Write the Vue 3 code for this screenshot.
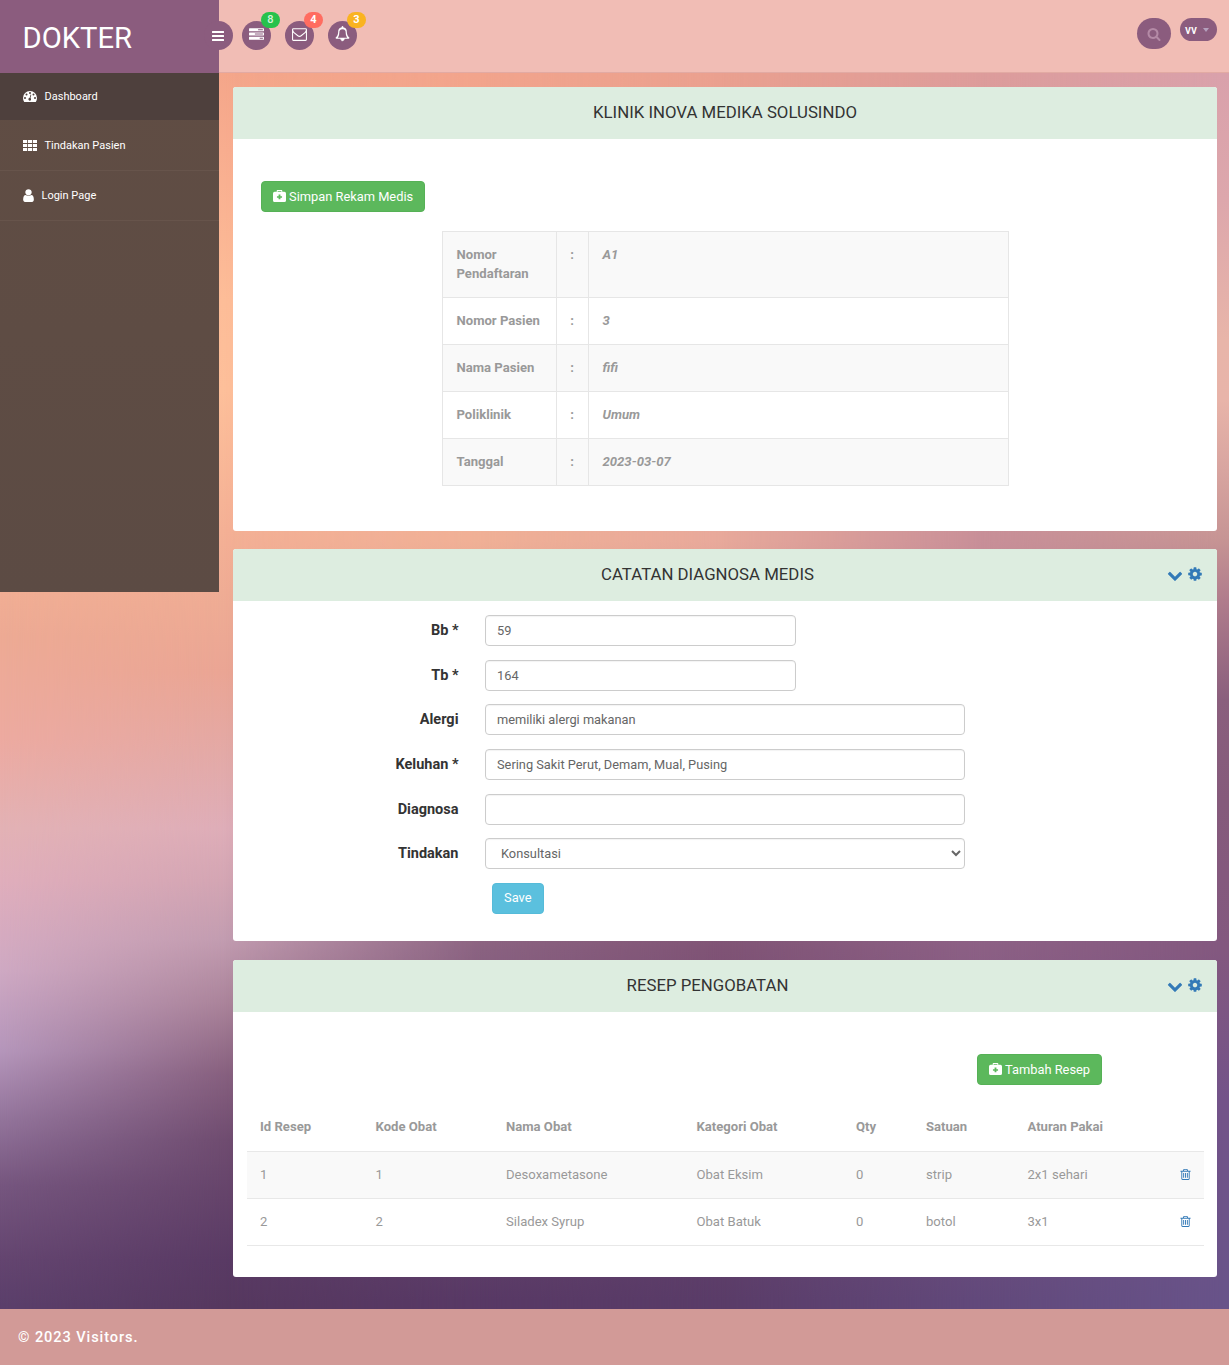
<script setup>
import { h } from 'vue'

const paths = {
  cog: 'M1152 896q0-106-75-181t-181-75-181 75-75 181 75 181 181 75 181-75 75-181zm512-109v222q0 12-8 23t-20 13l-185 28q-19 54-39 91 35 50 107 138 10 12 10 25t-9 23q-27 37-99 108t-94 71q-12 0-26-9l-138-108q-44 23-91 38-16 136-29 186-7 28-36 28h-222q-14 0-24.5-8.5t-11.5-21.5l-28-184q-49-16-90-37l-141 107q-10 9-25 9-14 0-25-11-126-114-165-168-7-10-7-23 0-12 8-23 15-21 51-66.5t54-70.5q-27-50-41-99l-183-27q-13-2-21-12.5t-8-23.5v-222q0-12 8-23t19-13l186-28q14-46 39-92-40-57-107-138-10-12-10-24 0-10 9-23 26-36 98.5-107.5t94.5-71.5q13 0 26 10l138 107q44-23 91-38 16-136 29-186 7-28 36-28h222q14 0 24.5 8.5t11.5 21.5l28 184q49 16 90 37l142-107q9-9 24-9 13 0 25 10 129 119 165 170 7 8 7 22 0 12-8 23-15 21-51 66.5t-54 70.5q26 50 41 98l183 28q13 2 21 12.5t8 23.5z',
  chevron: 'M1683 808l-742 741q-19 19-45 19t-45-19l-742-741q-19-19-19-45.5t19-45.5l166-165q19-19 45-19t45 19l531 531 531-531q19-19 45-19t45 19l166 165q19 19 19 45.5t-19 45.5z',
  search: 'M1216 832q0-185-131.5-316.5t-316.5-131.5-316.5 131.5-131.5 316.5 131.5 316.5 316.5 131.5 316.5-131.5 131.5-316.5zm512 832q0 52-38 90t-90 38q-54 0-90-38l-343-342q-179 124-399 124-143 0-273.5-55.5t-225-150-150-225-55.5-273.5 55.5-273.5 150-225 225-150 273.5-55.5 273.5 55.5 225 150 150 225 55.5 273.5q0 220-124 399l343 343q37 37 37 90z',
  user: 'M1536 1399q0 109-62.5 187t-150.5 78h-854q-88 0-150.5-78t-62.5-187q0-85 8.5-160.5t31.5-152 58.5-131 94-89 134.5-34.5q131 128 313 128t313-128q76 0 134.5 34.5t94 89 58.5 131 31.5 152 8.5 160.5zm-256-887q0 159-112.5 271.5t-271.5 112.5-271.5-112.5-112.5-271.5 112.5-271.5 271.5-112.5 271.5 112.5 112.5 271.5z',
  trash: 'M576 704h128v640h-128zM832 704h128v640h-128zM1088 704h128v640h-128zM1344 1460v-948h-896v948q0 22 7 40.5t14.500 27 10.500 8.500h832q3 0 10.500-8.500t14.500-27 7-40.500zm-672-1076h448l-48-117q-7-9-17-11h-317q-10 2-17 11zm928 32v64q0 14-9 23t-23 9h-96v948q0 83-47 143.500t-113 60.500h-832q-66 0-113-58.500t-47-141.500v-952h-96q-14 0-23-9t-9-23v-64q0-14 9-23t23-9h309l70-167q15-37 54-63t79-26h320q40 0 79 26t54 63l70 167h309q14 0 23 9t9 23z',
  bars: 'M192 256h1408q64 0 64 64v128q0 64-64 64H192q-64 0-64-64V320q0-64 64-64zM192 768h1408q64 0 64 64v128q0 64-64 64H192q-64 0-64-64V832q0-64 64-64zM192 1280h1408q64 0 64 64v128q0 64-64 64H192q-64 0-64-64v-128q0-64 64-64z',
  tasks: 'M64 128h1664q64 0 64 64v256q0 64-64 64H64q-64 0-64-64V192q0-64 64-64zM1088 256v128h576V256zM64 640h1664q64 0 64 64v256q0 64-64 64H64q-64 0-64-64V704q0-64 64-64zM704 768v128h960V768zM64 1152h1664q64 0 64 64v256q0 64-64 64H64q-64 0-64-64v-256q0-64 64-64zM1280 1280v128h384v-128z',
  envelope: 'M160 128h1472q160 0 160 160v1216q0 160-160 160H160q-160 0-160-160V288q0-160 160-160zM160 256q-32 0-32 32 0 208 147 324l464 367q90 70 157 70t157-70l464-367q147-116 147-324 0-32-32-32zM128 640v864q0 32 32 32h1472q32 0 32-32V640q-32 46-69 75l-429 360q-145 130-270 130t-270-130L197 715q-37-29-69-75z',
  bell: 'M912 1696q0-16-16-16-59 0-101.500-42.500t-42.500-101.500q0-16-16-16t-16 16q0 73 51.500 124.500t124.500 51.500q16 0 16-16zM346 1280h1100q-182-205-182-736 0-54-49-134-46-73-135-113-91-41-184-41t-184 41q-89 40-135 113-49 80-49 134 0 531-182 736zM1728 1280q0 52-38 90t-90 38h-448q0 106-75 181t-181 75-181-75-75-181H192q-52 0-90-38t-38-90q50-42 91-88t85-119.500 74.500-158.500 50-206T384 448q0-152 117-282.500T808 7q-8-19-8-39 0-40 28-68t68-28 68 28 28 68q0 20-8 39 190 28 307 158.500T1408 448q0 139 19.500 260t50 206 74.500 158.500 85 119.500 91 88z',
  grid: 'M0 128h528v384H0zM632 128h528v384H632zM1264 128h528v384h-528zM0 640h528v384H0zM632 640h528v384H632zM1264 640h528v384h-528zM0 1152h528v384H0zM632 1152h528v384H632zM1264 1152h528v384h-528z',
  gauge: 'M896 128a896 896 0 0 1 896 896q0 256-138 483-19 29-54 29H192q-35 0-54-29Q0 1280 0 1024A896 896 0 0 1 896 128zM256 896a128 128 0 1 0 0 256 128 128 0 1 0 0-256zM448 448a128 128 0 1 0 0 256 128 128 0 1 0 0-256zM896 256a128 128 0 1 0 0 256 128 128 0 1 0 0-256zM1344 448a128 128 0 1 0 0 256 128 128 0 1 0 0-256zM1536 896a128 128 0 1 0 0 256 128 128 0 1 0 0-256zM955 1026l101-382q6-26-17-45t-46-15-32 33l-101 382q-100 8-148 100t6 180 154 88 150-91q52-160-67-250z',
  medkit: 'M640 256h512V128H640zM512 256V96q0-96 96-96h576q96 0 96 96v160h288q224 0 224 224v960q0 224-224 224H224Q0 1664 0 1440V480q0-224 224-224zM768 640v224H544v192h224v224h256v-224h224V864h-224V640z'
}

const Icon = (props) =>
  h('svg', { viewBox: '0 -128 1792 1920', class: 'icon', 'aria-hidden': 'true' }, [
    h('path', { d: paths[props.name], fill: 'currentColor', 'fill-rule': 'evenodd' })
  ])
Icon.props = ['name']

const menu = [
  { label: 'Dashboard', icon: 'gauge', active: true },
  { label: 'Tindakan Pasien', icon: 'grid' },
  { label: 'Login Page', icon: 'user' }
]
const alerts = [
  { icon: 'tasks', count: 8, tone: 'green' },
  { icon: 'envelope', count: 4, tone: 'red' },
  { icon: 'bell', count: 3, tone: 'amber' }
]
const patient = [
  ['Nomor Pendaftaran', 'A1'],
  ['Nomor Pasien', '3'],
  ['Nama Pasien', 'fifi'],
  ['Poliklinik', 'Umum'],
  ['Tanggal', '2023-03-07']
]
const fields = [
  { label: 'Bb *', value: '59', short: true },
  { label: 'Tb *', value: '164', short: true },
  { label: 'Alergi', value: 'memiliki alergi makanan' },
  { label: 'Keluhan *', value: 'Sering Sakit Perut, Demam, Mual, Pusing' },
  { label: 'Diagnosa', value: '' }
]
const columns = ['Id Resep', 'Kode Obat', 'Nama Obat', 'Kategori Obat', 'Qty', 'Satuan', 'Aturan Pakai', '']
const recipes = [
  ['1', '1', 'Desoxametasone', 'Obat Eksim', '0', 'strip', '2x1 sehari'],
  ['2', '2', 'Siladex Syrup', 'Obat Batuk', '0', 'botol', '3x1']
]
</script>

<template>
  <div class="page">
    <div class="backdrop">
      <i class="b0"></i><i class="b1"></i><i class="b2"></i><i class="b3"></i><i class="b4"></i><i class="b5"></i>
    </div>

    <header class="header">
      <div class="brand">
        <span class="brand-name">DOKTER</span>
        <button class="toggle"><Icon name="bars" /></button>
      </div>
      <nav class="alerts">
        <a v-for="a in alerts" :key="a.icon" class="alert">
          <Icon :name="a.icon" />
          <span class="badge" :class="a.tone">{{ a.count }}</span>
        </a>
      </nav>
      <div class="tools">
        <span class="search"><Icon name="search" /></span>
        <span class="account">vv<b class="caret"></b></span>
      </div>
    </header>

    <div class="body">
      <aside class="sidebar">
        <a v-for="m in menu" :key="m.label" class="item" :class="[m.icon, { active: m.active }]">
          <Icon :name="m.icon" /><span>{{ m.label }}</span>
        </a>
      </aside>

      <main class="main">
        <section class="panel p1">
          <h2 class="head">KLINIK INOVA MEDIKA SOLUSINDO</h2>
          <button class="btn green save-record"><Icon name="medkit" />Simpan Rekam Medis</button>
          <table class="info">
            <tbody>
              <tr v-for="r in patient" :key="r[0]">
                <th>{{ r[0] }}</th>
                <td class="colon">:</td>
                <td class="val">{{ r[1] }}</td>
              </tr>
            </tbody>
          </table>
        </section>

        <section class="panel p2">
          <h2 class="head with-actions">CATATAN DIAGNOSA MEDIS
            <span class="actions"><Icon name="chevron" /><Icon name="cog" /></span>
          </h2>
          <form class="form" @submit.prevent>
            <div v-for="f in fields" :key="f.label" class="row">
              <label>{{ f.label }}</label>
              <input type="text" :value="f.value" :class="{ short: f.short }" />
            </div>
            <div class="row">
              <label>Tindakan</label>
              <select><option>Konsultasi</option></select>
            </div>
            <button class="btn blue">Save</button>
          </form>
        </section>

        <section class="panel p3">
          <h2 class="head with-actions">RESEP PENGOBATAN
            <span class="actions"><Icon name="chevron" /><Icon name="cog" /></span>
          </h2>
          <button class="btn green add"><Icon name="medkit" />Tambah Resep</button>
          <table class="list">
            <colgroup>
              <col style="width: 115.5px" /><col style="width: 130.5px" /><col style="width: 190.5px" />
              <col style="width: 159.5px" /><col style="width: 70px" /><col style="width: 101.5px" />
              <col style="width: 151.5px" /><col />
            </colgroup>
            <thead>
              <tr><th v-for="c in columns" :key="c">{{ c }}</th></tr>
            </thead>
            <tbody>
              <tr v-for="r in recipes" :key="r[0]">
                <td v-for="(c, i) in r" :key="i">{{ c }}</td>
                <td><a class="del"><Icon name="trash" /></a></td>
              </tr>
            </tbody>
          </table>
        </section>
      </main>
    </div>

    <footer class="footer">© 2023 Visitors.</footer>
  </div>
</template>

<style>
body { margin: 0; }
</style>

<style scoped>
* { box-sizing: border-box; }
.page {
  position: relative;
  isolation: isolate;
  width: 1229px;
  height: 1365px;
  display: flex;
  flex-direction: column;
  overflow: hidden;
  font-family: Roboto, "Liberation Sans", sans-serif;
  color: #999;
}
.backdrop, .backdrop i { position: absolute; inset: 0; }
.backdrop { z-index: -1; }
.b0 { background: linear-gradient(#f4a68a 73px, #f1ae94 593px, #edaa94 636px, #edaaa0 738px, #e3b2b5 828px, #e0aebc 881px, #cfa9c3 970px, #b596bb 1051px, #94759c 1118px, #76567f 1185px, #644570 1260px, #5b3f6b 1305px); }
.b1 { background: linear-gradient(#f4a68a 73px, #f8ad8f 150px, #fdbd98 300px, #fdbf9a 390px, #f4b095 530px, #eeab94 605px, #eaa594 672px, #e3a9a6 752px, #deadb8 828px, #d3a5b3 881px, #c29cb0 939px, #a98299 1006px, #87607f 1073px, #6f4c70 1140px, #593a64 1260px, #56385f 1305px);
  mask-image: linear-gradient(90deg, transparent, #000 225px); }
.b2 { background: linear-gradient(#f2a48c 73px, #f0b096 540px, #8a6281 950px, #583965 1300px);
  mask-image: linear-gradient(90deg, transparent 225px, #000 480px); }
.b3 { background: linear-gradient(#eaa08f 73px, #e8a99b 540px, #7f5375 950px, #5a3c68 1300px);
  mask-image: linear-gradient(90deg, transparent 480px, #000 720px); }
.b4 { background: linear-gradient(#dd9c9b 73px, #c88f98 540px, #8c6085 950px, #62497b 1300px);
  mask-image: linear-gradient(90deg, transparent 720px, #000 980px); }
.b5 { background: linear-gradient(#d9a1ab 73px, #dda7ac 200px, #e8b5a9 340px, #e8b4a9 400px, #d8a5a0 470px, #c69494 540px, #b07c8c 600px, #8a5f7d 700px, #855a7b 800px, #83587f 950px, #735389 1100px, #685389 1300px);
  mask-image: linear-gradient(90deg, transparent 980px, #000 1223px); }
.icon { display: block; flex: none; }

.header {
  height: 73px;
  flex: none;
  display: flex;
  background: #f1bdb5;
  border-bottom: 1px solid #e2aaa3;
}
.brand {
  width: 219px;
  height: 73px;
  background: #8b5c7e;
  display: flex;
  align-items: center;
  justify-content: space-between;
  padding: 3px 0 0 22.5px;
}
.brand-name { color: #fff; font-size: 29.2px; line-height: 34px; }
.toggle {
  width: 29px; height: 29px;
  margin: -5px -14px 0 0;
  padding: 0 2px 1px 0;
  border: 0;
  border-radius: 50%;
  background: #8b5c7e;
  color: #fff;
  display: flex; align-items: center; justify-content: center;
}
.toggle .icon { width: 14px; height: 15px; }
.alerts { display: flex; gap: 14px; padding: 20.5px 0 0 23px; }
.alert {
  position: relative;
  width: 29px; height: 29px;
  border-radius: 50%;
  background: #8b5c7e;
  color: #fff;
  display: flex; justify-content: center;
  padding-top: 5px;
}
.alert .icon { width: 15px; height: 16px; }
.badge {
  position: absolute;
  left: 19px; top: -8.5px;
  width: 19px; height: 16px;
  border-radius: 8px;
  font-size: 11px; line-height: 16px; font-weight: 700;
  text-align: center;
}
.green.badge { background: #27c24c; color: #d4f5dc; font-weight: 500; }
.red { background: #ff6c60; }
.amber { background: #fab320; }
.tools { margin-left: auto; display: flex; gap: 9px; padding: 18px 12px 0 0; }
.search {
  width: 34px; height: 31px;
  border-radius: 17px;
  background: #8b5c7e;
  color: #b48aa6;
  display: flex; align-items: center; justify-content: center;
}
.search .icon { width: 14px; height: 15px; }
.account {
  width: 37px; height: 23px;
  border-radius: 12px;
  background: #8b5c7e;
  color: #fff;
  font-size: 12px; font-weight: 500; line-height: 22px;
  display: flex; align-items: center;
  padding-left: 5px;
  gap: 6px;
}
.caret { border: 3.5px solid transparent; border-top: 4px solid #b5a0bd; border-bottom: 0; }

.body { display: flex; height: 1236px; }
.sidebar { width: 219px; height: 519px; background: linear-gradient(#604d44, #5c4b44); }
.item {
  display: flex;
  align-items: center;
  height: 50px;
  padding: 0 0 0 22.5px;
  border-bottom: 1px solid #67544b;
  color: #fff;
  font-size: 11px;
}
.item.active { height: 47px; background: #4e403d; border-bottom-color: #4e403d; padding-bottom: 0; }
.item.active + .item { height: 51px; }
.item .icon { width: 14px; height: 15px; margin-right: 8px; }
.item.user .icon { width: 15px; height: 16px; margin: -1px 6px 0 -2px; }

.main { width: 984px; margin: 14px 0 0 14px; }
.panel { background: #fff; border-radius: 3px; display: flex; flex-direction: column; overflow: hidden; }
.p1 { height: 444px; margin-bottom: 18px; }
.p2 { height: 392px; margin-bottom: 19px; }
.p3 { height: 317px; }
.head {
  position: relative;
  flex: none;
  margin: 0;
  height: 52px;
  background: #ddede0;
  color: #333;
  font-size: 16.8px;
  font-weight: 400;
  line-height: 51px;
  text-align: center;
}
.with-actions { padding-right: 35px; }
.actions { position: absolute; right: 14px; top: 16px; display: flex; gap: 4px; color: #337ab7; }
.actions .icon { width: 16px; height: 17px; }
.actions .icon:first-child { margin-top: 1px; }
.btn {
  display: flex;
  align-items: center;
  height: 31px;
  padding: 0 0 1px 11px;
  border: 1px solid;
  border-radius: 4px;
  font: 400 12.85px Roboto, sans-serif;
  white-space: nowrap;
  color: #fff;
}
.btn .icon { width: 13px; height: 14px; margin-right: 3px; }
.green.btn { background: #5cb85c; border-color: #56b156; }
.blue.btn { background: #5bc0de; border-color: #55bbd9; }
.save-record { width: 164px; margin: 42px 0 0 28px; }
.info {
  width: 567px;
  margin: 19px 0 0 208.5px;
  border-collapse: collapse;
  table-layout: fixed;
  font-size: 13.1px;
  line-height: 19px;
  font-weight: 700;
}
.info th, .info td { border: 1px solid #e6e6e6; padding: 13px 14px 14px; text-align: left; vertical-align: top; }
.info th { width: 114px; padding-right: 8px; }
.info .colon { width: 32px; padding: 13px 0; text-align: center; }
.val { font-style: italic; }
.info tr:nth-child(odd), .list tbody tr:nth-child(odd) { background: #f9f9f9; }

.form { display: flex; flex-direction: column; padding: 14px 0 0 0; }
.row { display: flex; height: 31px; margin-bottom: 13.7px; }
.row label {
  width: 225.5px; margin-right: 26.5px;
  text-align: right;
  color: #333; font-size: 14.5px; font-weight: 700; line-height: 32px;
}
input, select {
  width: 480px; height: 31px;
  margin: 0;
  border: 1px solid #ccc;
  border-radius: 4px;
  background: #fff;
  color: #666;
  font: 400 12.8px Roboto, sans-serif;
  padding: 0 11px;
  box-shadow: inset 0 1px 1px rgba(0, 0, 0, 0.05);
}
input.short { width: 311px; }
.blue.btn { width: 52px; margin: -0.5px 0 0 259px; }
.add { width: 125px; margin: 42px 0 0 744px; }
.list { width: 957px; margin: 18px 0 0 14px; border-collapse: collapse; table-layout: fixed; font-size: 13.1px; }
.list th, .list td { height: 47px; padding: 0 0 0 13px; text-align: left; border-bottom: 1px solid #e8e8e8; }
.list th { font-weight: 700; height: 48px; }
.del { color: #337ab7; display: block; margin: -1px 0 0 -0.5px; }
.del .icon { width: 13px; height: 14px; }

.footer {
  height: 56px;
  flex: none;
  background: #d29a97;
  color: #fff;
  font-size: 14.6px;
  font-weight: 500;
  letter-spacing: 0.9px;
  line-height: 56px;
  padding-left: 18px;
}
</style>
